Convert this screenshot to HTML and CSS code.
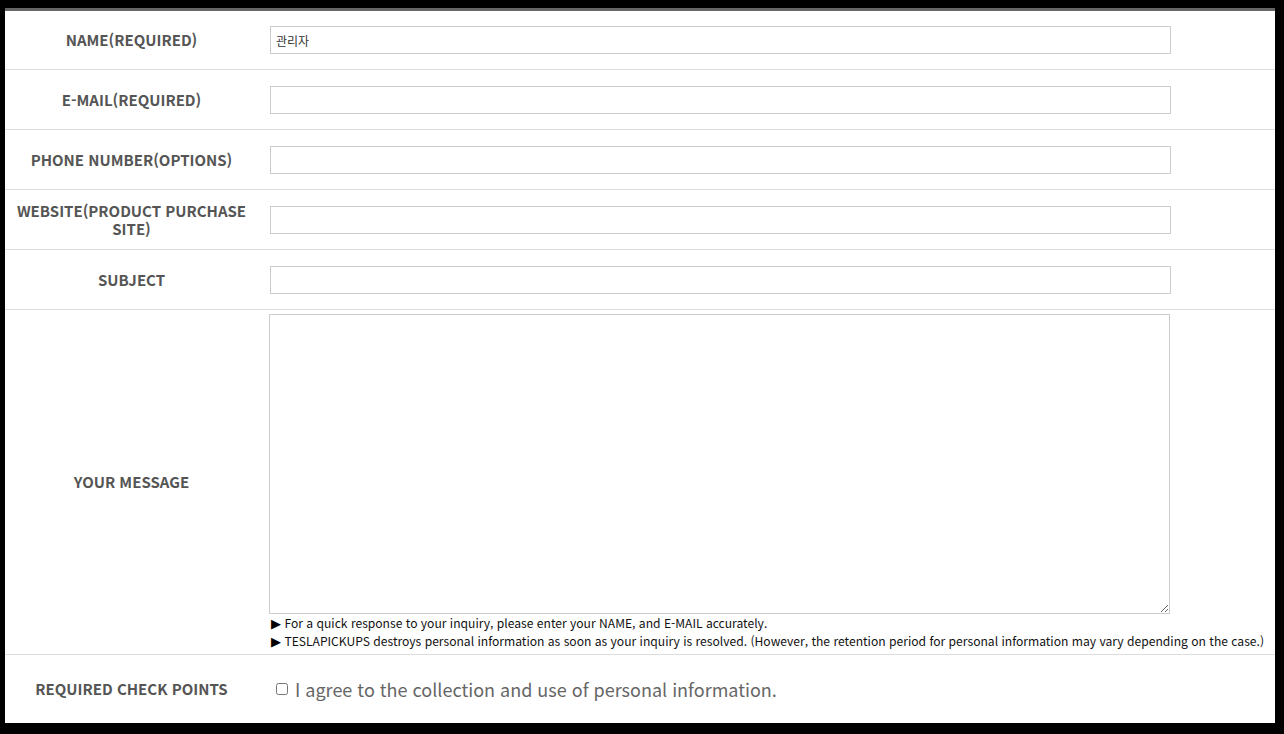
FILE: index.html
```html
<!DOCTYPE html>
<html lang="ko">
<head>
<meta charset="utf-8">
<title>Contact form</title>
<link rel="stylesheet" href="styles.css">
</head>
<body>
<form class="panel">
  <div class="row row-first">
    <div class="label">NAME(REQUIRED)</div>
    <div class="field"><input class="text" type="text" value="관리자"></div>
  </div>
  <div class="row">
    <div class="label">E-MAIL(REQUIRED)</div>
    <div class="field"><input class="text" type="text"></div>
  </div>
  <div class="row">
    <div class="label">PHONE NUMBER(OPTIONS)</div>
    <div class="field"><input class="text" type="text"></div>
  </div>
  <div class="row">
    <div class="label">WEBSITE(PRODUCT PURCHASE SITE)</div>
    <div class="field"><input class="text" type="text"></div>
  </div>
  <div class="row">
    <div class="label">SUBJECT</div>
    <div class="field"><input class="text" type="text"></div>
  </div>
  <div class="row row-message">
    <div class="label">YOUR MESSAGE</div>
    <div class="field field-message">
      <textarea class="message"></textarea>
      <p class="note"><span class="arrow">&#x25B6;&#xFE0E;</span> For a quick response to your inquiry, please enter your NAME, and E-MAIL accurately.</p>
      <p class="note"><span class="arrow">&#x25B6;&#xFE0E;</span> TESLAPICKUPS destroys personal information as soon as your inquiry is resolved. (However, the retention period for personal information may vary depending on the case.)</p>
    </div>
  </div>
  <div class="row row-last">
    <div class="label">REQUIRED CHECK POINTS</div>
    <div class="field field-agree">
      <label class="agree"><input class="check" type="checkbox"> I agree to the collection and use of personal information.</label>
    </div>
  </div>
</form>
</body>
</html>
```
FILE: styles.css
```css
html, body {
  margin: 0;
  padding: 0;
  background: #000;
}

body {
  padding: 8px 9px 11px 5px;
  font-family: "Noto Sans CJK KR", "Noto Sans", sans-serif;
}

.panel {
  display: flex;
  flex-direction: column;
  width: 1270px;
  background: #fff;
  border-top: 3px solid #666;
  margin: 0;
}

.row {
  display: grid;
  grid-template-columns: 253px 1fr;
  height: 60px;
  box-sizing: border-box;
  border-bottom: 1px solid #ddd;
}

.row-first {
  height: 59px;
}

.row-message {
  height: 345px;
}

.row-last {
  height: 68px;
  border-bottom: none;
}

.label {
  display: flex;
  align-items: center;
  justify-content: center;
  text-align: center;
  padding: 0 6px;
  font-size: 15px;
  line-height: 18px;
  font-weight: bold;
  color: #555;
}

.field {
  display: flex;
  align-items: center;
  padding-left: 12px;
}

.text {
  box-sizing: border-box;
  width: 901px;
  height: 28px;
  margin: 0;
  padding: 0 5px;
  border: 1px solid #ccc;
  border-radius: 0;
  outline: none;
  font-family: "Noto Sans CJK KR", "Noto Sans", sans-serif;
  font-size: 12px;
  color: #333;
  background: #fff;
}

.field-message {
  flex-direction: column;
  align-items: flex-start;
  padding: 4px 0 0 11px;
}

.message {
  box-sizing: border-box;
  width: 901px;
  height: 300px;
  margin: 0;
  border: 1px solid #ccc;
  border-radius: 0;
  outline: none;
  resize: vertical;
  font-family: "Noto Sans CJK KR", "Noto Sans", sans-serif;
}

.note {
  margin: 0;
  padding-left: 2px;
  font-size: 12.1px;
  line-height: 18px;
  height: 18px;
  color: #111;
  white-space: nowrap;
}

.arrow {
  font-family: "DejaVu Sans", sans-serif;
  font-size: 13px;
  line-height: 1;
  color: #000;
}

.field-agree {
  padding-left: 18px;
}

.agree {
  display: flex;
  align-items: center;
  font-size: 18px;
  color: #666;
  margin-top: -1px;
}

.check {
  width: 12px;
  height: 12px;
  margin: 0 7px 0 0;
}
```
